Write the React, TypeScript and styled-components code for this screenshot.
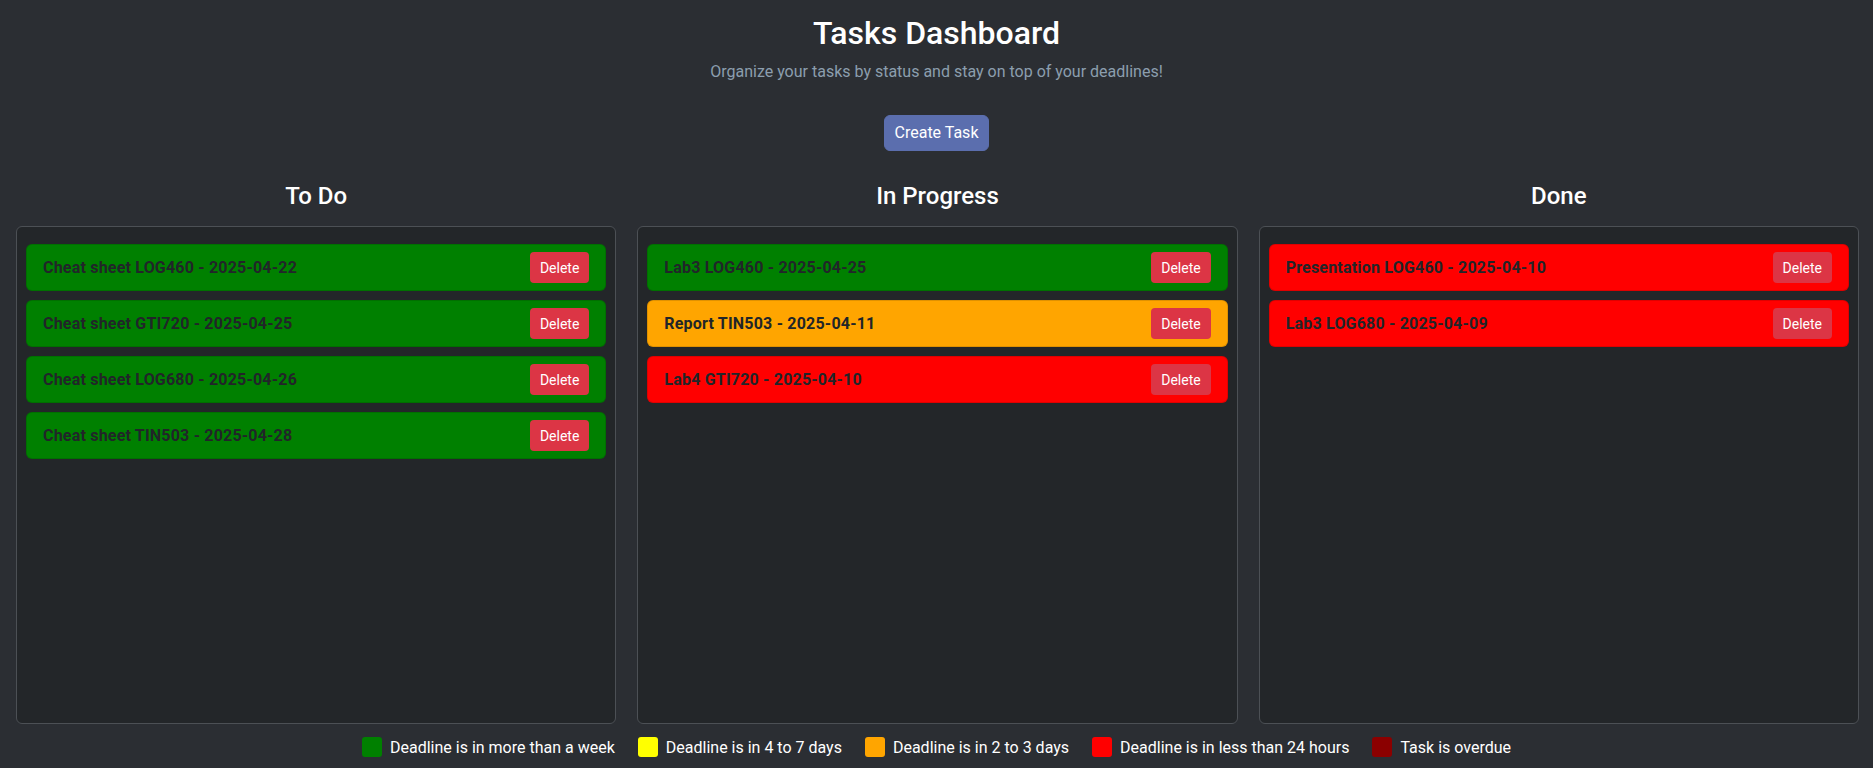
import React from "react";
import styled, { createGlobalStyle } from "styled-components";

const GlobalStyle = createGlobalStyle`
  html, body { margin: 0; padding: 0; }
  body {
    background: #2b2e33;
    color: #ffffff;
    font-family: "Segoe UI", Roboto, "Noto Sans", "Liberation Sans", sans-serif;
    -webkit-font-smoothing: antialiased;
  }
  * { box-sizing: border-box; }
`;

const Page = styled.div`
  width: 100%;
  height: 768px;
  display: flex;
  flex-direction: column;
  overflow: hidden;
`;

const Header = styled.header`
  text-align: center;
  padding-top: 14px;
`;

const Title = styled.h1`
  margin: 0;
  font-size: 32px;
  line-height: 38px;
  font-weight: 500;
  color: #ffffff;
`;

const Subtitle = styled.p`
  margin: 8px 0 0;
  font-size: 16px;
  line-height: 24px;
  color: #8c9eae;
`;

const ButtonRow = styled.div`
  display: flex;
  justify-content: center;
  margin-top: 31px;
`;

const CreateButton = styled.button`
  height: 36px;
  padding: 0 10px;
  border: 1px solid #5b6eae;
  border-radius: 6px;
  background: #5b6eae;
  color: #ffffff;
  font-family: inherit;
  font-size: 16px;
  line-height: 24px;
  cursor: pointer;
`;

const Board = styled.main`
  display: grid;
  grid-template-columns: repeat(3, 1fr);
  gap: 21px;
  padding: 0 14px 0 16px;
  margin-top: 31px;
`;

const Column = styled.section`
  display: flex;
  flex-direction: column;
  min-width: 0;
`;

const ColumnTitle = styled.h2`
  margin: 0 0 15px;
  text-align: center;
  font-size: 24px;
  line-height: 29px;
  font-weight: 500;
  color: #ffffff;
`;

const ColumnBody = styled.div`
  height: 498px;
  border: 1px solid #4c5055;
  border-radius: 6px;
  background: #232629;
  padding: 17px 9px;
  display: flex;
  flex-direction: column;
  gap: 9px;
`;

const Card = styled.div<{ $color: string }>`
  display: flex;
  align-items: center;
  justify-content: space-between;
  height: 47px;
  padding: 0 16px;
  border-radius: 6px;
  border: 1px solid rgba(0, 0, 0, 0.12);
  background: ${(p) => p.$color};
`;

const CardText = styled.span`
  font-size: 16px;
  font-weight: 700;
  letter-spacing: 0.2px;
  color: #212529;
`;

const DeleteButton = styled.button`
  height: 31px;
  padding: 0 10px;
  border: none;
  border-radius: 4px;
  background: #dc3545;
  color: #ffffff;
  font-family: inherit;
  font-size: 14px;
  cursor: pointer;
`;

const Legend = styled.footer`
  display: flex;
  justify-content: center;
  align-items: center;
  gap: 23px;
  margin-top: 13px;
  height: 20px;
`;

const LegendItem = styled.div`
  display: flex;
  align-items: center;
  gap: 8px;
  font-size: 16px;
  color: #ffffff;
`;

const Swatch = styled.span<{ $color: string }>`
  width: 20px;
  height: 20px;
  border-radius: 3px;
  background: ${(p) => p.$color};
`;

const GREEN = "#008000";
const ORANGE = "#ffa500";
const RED = "#ff0000";

type Task = { title: string; color: string };

const columns: { name: string; tasks: Task[] }[] = [
  {
    name: "To Do",
    tasks: [
      { title: "Cheat sheet LOG460 - 2025-04-22", color: GREEN },
      { title: "Cheat sheet GTI720 - 2025-04-25", color: GREEN },
      { title: "Cheat sheet LOG680 - 2025-04-26", color: GREEN },
      { title: "Cheat sheet TIN503 - 2025-04-28", color: GREEN },
    ],
  },
  {
    name: "In Progress",
    tasks: [
      { title: "Lab3 LOG460 - 2025-04-25", color: GREEN },
      { title: "Report TIN503 - 2025-04-11", color: ORANGE },
      { title: "Lab4 GTI720 - 2025-04-10", color: RED },
    ],
  },
  {
    name: "Done",
    tasks: [
      { title: "Presentation LOG460 - 2025-04-10", color: RED },
      { title: "Lab3 LOG680 - 2025-04-09", color: RED },
    ],
  },
];

const legend = [
  { color: "#008000", label: "Deadline is in more than a week" },
  { color: "#ffff00", label: "Deadline is in 4 to 7 days" },
  { color: "#ffa500", label: "Deadline is in 2 to 3 days" },
  { color: "#ff0000", label: "Deadline is in less than 24 hours" },
  { color: "#8b0000", label: "Task is overdue" },
];

export default function App() {
  return (
    <>
      <GlobalStyle />
      <Page>
        <Header>
          <Title>Tasks Dashboard</Title>
          <Subtitle>Organize your tasks by status and stay on top of your deadlines!</Subtitle>
        </Header>
        <ButtonRow>
          <CreateButton>Create Task</CreateButton>
        </ButtonRow>
        <Board>
          {columns.map((col) => (
            <Column key={col.name}>
              <ColumnTitle>{col.name}</ColumnTitle>
              <ColumnBody>
                {col.tasks.map((t) => (
                  <Card key={t.title} $color={t.color}>
                    <CardText>{t.title}</CardText>
                    <DeleteButton>Delete</DeleteButton>
                  </Card>
                ))}
              </ColumnBody>
            </Column>
          ))}
        </Board>
        <Legend>
          {legend.map((l) => (
            <LegendItem key={l.label}>
              <Swatch $color={l.color} />
              {l.label}
            </LegendItem>
          ))}
        </Legend>
      </Page>
    </>
  );
}
